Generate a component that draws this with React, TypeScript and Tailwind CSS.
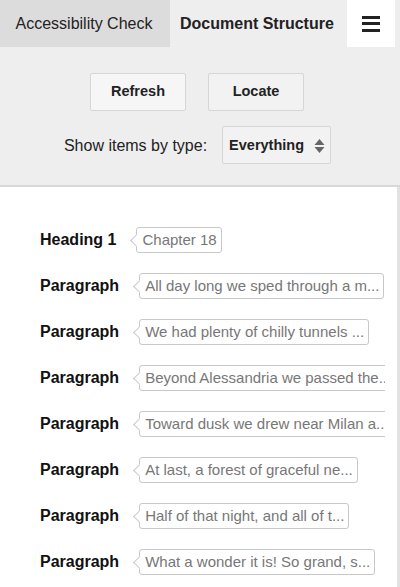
import React from 'react';

interface StructureItem {
  id: number;
  type: string;
  text: string;
}

const items: StructureItem[] = [
  { id: 1, type: 'Heading 1', text: 'Chapter 18' },
  { id: 2, type: 'Paragraph', text: 'All day long we sped through a m...' },
  { id: 3, type: 'Paragraph', text: 'We had plenty of chilly tunnels ...' },
  { id: 4, type: 'Paragraph', text: 'Beyond Alessandria we passed the...' },
  { id: 5, type: 'Paragraph', text: 'Toward dusk we drew near Milan a...' },
  { id: 6, type: 'Paragraph', text: 'At last, a forest of graceful ne...' },
  { id: 7, type: 'Paragraph', text: 'Half of that night, and all of t...' },
  { id: 8, type: 'Paragraph', text: 'What a wonder it is! So grand, s...' },
];

const App: React.FC = () => {
  return (
    <div className="w-[400px] h-[587px] overflow-hidden bg-white font-['Liberation_Sans',Arial,sans-serif] text-[#222]">
      {/* tabs */}
      <div className="flex h-[47px] bg-[#eeeeee]">
        <div className="w-[170px] bg-[#dcdcdc] flex items-center justify-center pr-[2px] text-[16px]">
          Accessibility Check
        </div>
        <div className="w-[177px] flex items-center pl-[10px] text-[16px] font-bold">
          Document Structure
        </div>
        <div className="w-[48px] bg-white flex flex-col items-center justify-center gap-[3.5px]">
          <span className="block w-[18px] h-[3px] bg-[#222]" />
          <span className="block w-[18px] h-[3px] bg-[#222]" />
          <span className="block w-[18px] h-[3px] bg-[#222]" />
        </div>
      </div>

      {/* controls */}
      <div className="h-[140px] bg-[#eeeeee] border-b-2 border-[#d8d8d8] pt-[26px] flex flex-col items-center">
        <div className="flex gap-[22px] pr-[6px]">
          <button className="w-[96px] h-[38px] bg-[#f6f6f6] border border-[#d6d6d6] rounded-[2px] text-[14.5px] font-bold">
            Refresh
          </button>
          <button className="w-[96px] h-[38px] bg-[#f2f2f2] border border-[#d6d6d6] rounded-[2px] text-[14.5px] font-bold">
            Locate
          </button>
        </div>
        <div className="flex items-center mt-[15px] pr-[5px]">
          <span className="text-[16px] pt-[2px]">Show items by type:</span>
          <div className="ml-[15px] w-[109px] h-[38px] bg-[#f2f2f2] border border-[#d6d6d6] rounded-[2px] flex items-center pl-[6px] pr-[5px] pt-[2px]">
            <span className="text-[14.5px] font-bold flex-1">Everything</span>
            <svg width="11" height="16" viewBox="0 0 11 16">
              <path d="M5.5 1 L10.5 7 H0.5 Z" fill="#666" />
              <path d="M5.5 15 L10.5 9 H0.5 Z" fill="#666" />
            </svg>
          </div>
        </div>
      </div>

      {/* list */}
      <div className="flex h-[400px]">
        <div className="flex-1 min-w-0 pr-[12px]">
          <div className="overflow-hidden pt-[40px] pl-[40px] flex flex-col gap-[20px]">
            {items.map((item) => (
              <div key={item.id} className="flex items-center h-[26px] whitespace-nowrap">
                <span className="text-[16px] font-bold text-[#111]">{item.type}</span>
                <div className="relative ml-[20px] h-[26px] border border-[#c8c8c8] rounded-[3px] bg-white pl-[5px] pr-[4px] flex items-center">
                  <span className="absolute left-[-5px] top-[8px] w-[9px] h-[9px] bg-white border-l border-b border-[#c8c8c8] rotate-45" />
                  <span className="relative text-[15px] text-[#777]">{item.text}</span>
                </div>
              </div>
            ))}
          </div>
        </div>
        <div className="w-[3px] bg-[#e2e2e2]" />
      </div>
    </div>
  );
};

export default App;
